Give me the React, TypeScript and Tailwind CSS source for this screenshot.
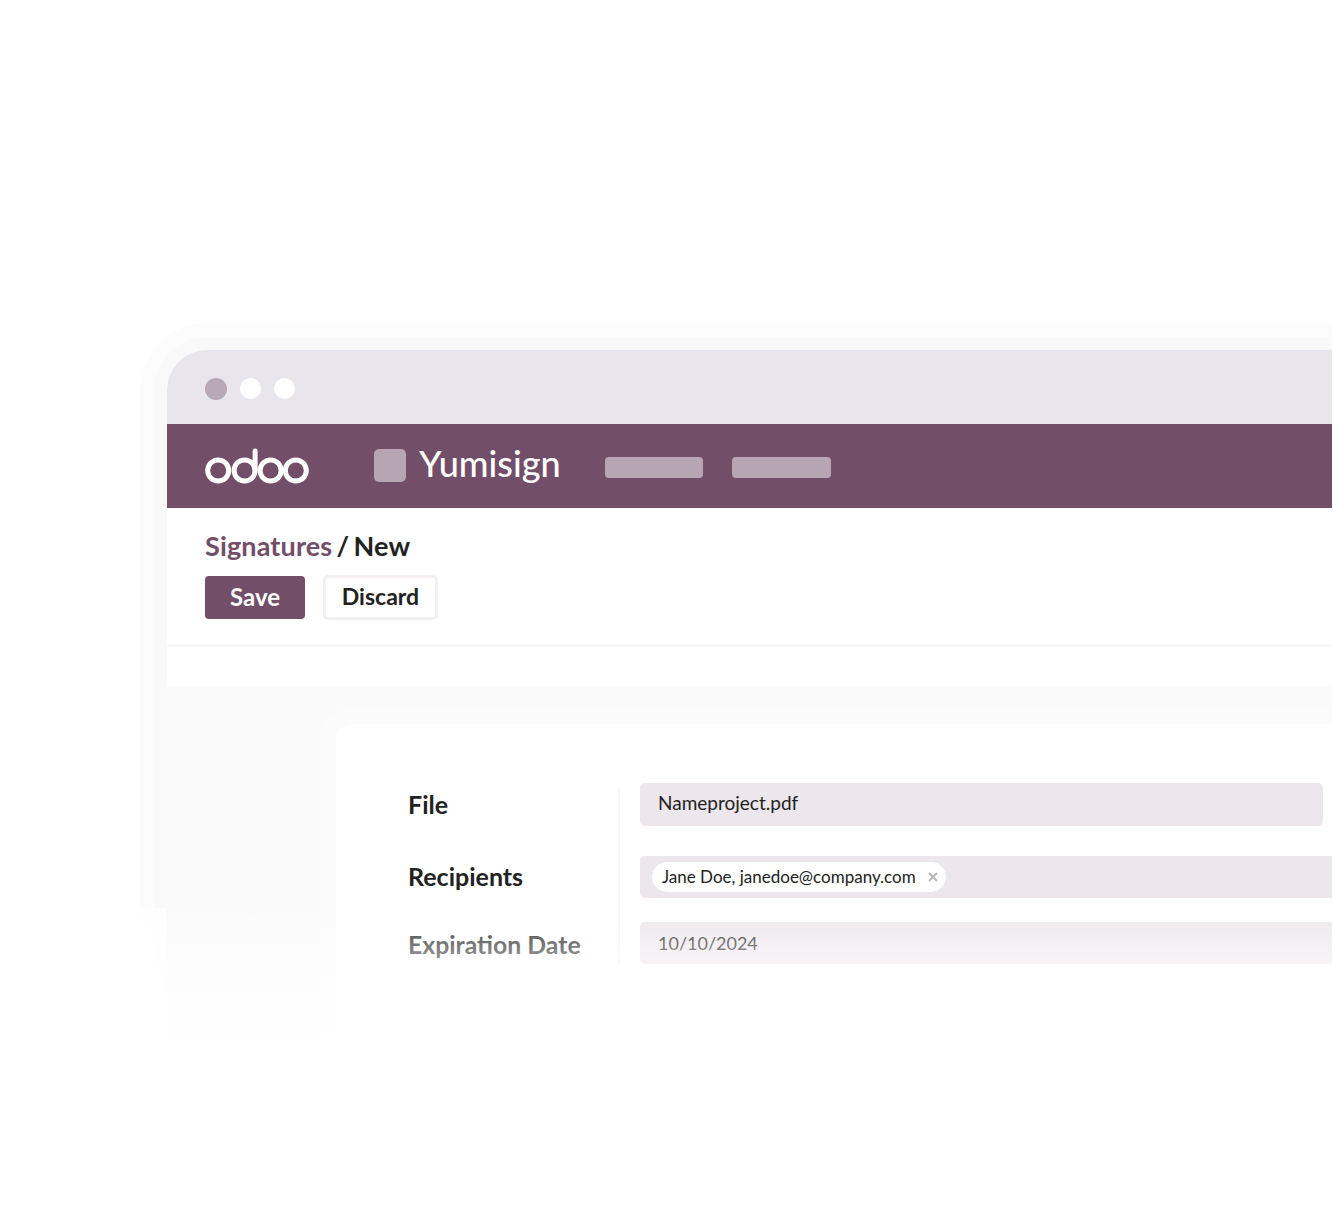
import React from 'react';

const font = { fontFamily: 'Lato, "Noto Sans", sans-serif' };

const App: React.FC = () => {
  return (
    <div className="relative w-[1333px] h-[1206px] bg-white overflow-hidden" style={font}>
      <div className="w-[1332px] h-[1206px] overflow-hidden pl-[167px] pt-[350px]">
        {/* window */}
        <div className="w-[1300px] h-[800px] rounded-tl-[40px] bg-white shadow-[0_0_0_13px_#f9f9f9,0_0_0_27px_#fcfcfc]">
          {/* title bar */}
          <div className="h-[74px] rounded-tl-[40px] bg-[#e8e6ec] flex items-center gap-[13px] pl-[38px] pt-[3px]">
            <span className="w-[22px] h-[22px] rounded-full bg-[#b8a9b7]" />
            <span className="w-[21px] h-[21px] rounded-full bg-white" />
            <span className="w-[21px] h-[21px] rounded-full bg-white" />
          </div>

          {/* nav */}
          <div className="h-[84px] bg-[#724e68] flex items-center pl-[38px]">
            <svg width="104" height="36" viewBox="0 0 104 36" fill="none" stroke="white" strokeWidth="5" className="mb-[1px]">
              <circle cx="13.2" cy="22.5" r="10.5" />
              <circle cx="39.6" cy="22.5" r="10.5" />
              <path d="M50.1 22.5V3" strokeLinecap="round" />
              <circle cx="65.6" cy="22.5" r="10.5" />
              <circle cx="90.8" cy="22.5" r="10.5" />
            </svg>
            <span className="ml-[65px] w-[32px] h-[33px] mb-[1px] rounded-[5px] bg-[#b8a5b3]" />
            <span className="ml-[13px] w-[141px] text-[36px] leading-none font-medium text-white whitespace-nowrap mb-[6px]">Yumisign</span>
            <span className="ml-[45px] w-[98px] h-[21px] mt-[2px] rounded-[4px] bg-[#b8a5b3]" />
            <span className="ml-[29px] w-[99px] h-[21px] mt-[2px] rounded-[4px] bg-[#b8a5b3]" />
          </div>

          {/* control panel */}
          <div className="h-[139px] border-b-[3px] border-[#f8f7f8] pl-[38px] pt-[21px]">
            <div className="text-[27px] leading-[34px] font-bold whitespace-nowrap text-[#222222] tracking-[0.15px] [word-spacing:-2.5px]">
              <span className="text-[#724e68]">Signatures</span> / New
            </div>
            <div className="flex items-center mt-[12px]">
              <button className="w-[100px] h-[43px] rounded-[4px] bg-[#724e68] text-white text-[24px] font-bold pb-[2px]">Save</button>
              <button className="ml-[18px] w-[115px] h-[45px] rounded-[5px] bg-white border-[3px] border-[#f3eff2] text-[#222222] text-[23px] font-bold pb-[2px]">Discard</button>
            </div>
          </div>
          <div className="h-[39px] bg-white" />

          {/* form area */}
          <div className="h-[551px] bg-[#fafafa] pl-[169px] pt-[38px]">
            <div className="h-[500px] rounded-tl-[16px] bg-white shadow-[0_0_0_16px_#fbfbfb] pl-[72px] pt-[59px] flex">
              <div className="w-[210px] text-[25px] font-bold text-[#222222] whitespace-nowrap">
                <div className="h-[43px] flex items-center pt-[1px]">File</div>
                <div className="h-[42px] mt-[30px] flex items-center">Recipients</div>
                <div className="h-[42px] mt-[24px] flex items-center pt-[3px] text-[24.8px]">Expiration Date</div>
              </div>
              <div className="w-[2px] h-[177px] mt-[5px] bg-[#f6f5f6]" />
              <div className="ml-[20px] flex-1">
                <div className="w-[683px] h-[43px] rounded-[5px] bg-[#ede6ec] flex items-center pl-[18px] pb-[2px] text-[19px] text-[#222222]">Nameproject.pdf</div>
                <div className="h-[42px] mt-[30px] bg-[#ede6ec] rounded-l-[5px] flex items-center pl-[12px]">
                  <div className="w-[294px] h-[30px] rounded-full bg-white flex items-center pl-[10px] text-[17px] text-[#222222] whitespace-nowrap">
                    <span className="w-[266px]">Jane Doe, janedoe@company.com</span>
                    <svg width="10" height="10" viewBox="0 0 10 10" stroke="#b9b5b8" strokeWidth="2">
                      <path d="M1 1L9 9M9 1L1 9" />
                    </svg>
                  </div>
                </div>
                <div className="h-[42px] mt-[24px] bg-[#ede6ec] rounded-l-[5px] flex items-center pl-[18px] text-[18px] text-[#222222]">10/10/2024</div>
              </div>
            </div>
          </div>
        </div>
      </div>

      {/* fade to white over the bottom of the window */}
      <div className="absolute left-0 top-[905px] w-full h-[301px] bg-[linear-gradient(to_bottom,rgba(255,255,255,0)_0px,rgba(255,255,255,0.15)_15px,rgba(255,255,255,0.6)_62px,rgba(255,255,255,0.97)_145px,#ffffff_220px)]" />
      <div className="absolute left-0 top-[908px] w-[167px] h-[298px] bg-white/80" />
    </div>
  );
};

export default App;
